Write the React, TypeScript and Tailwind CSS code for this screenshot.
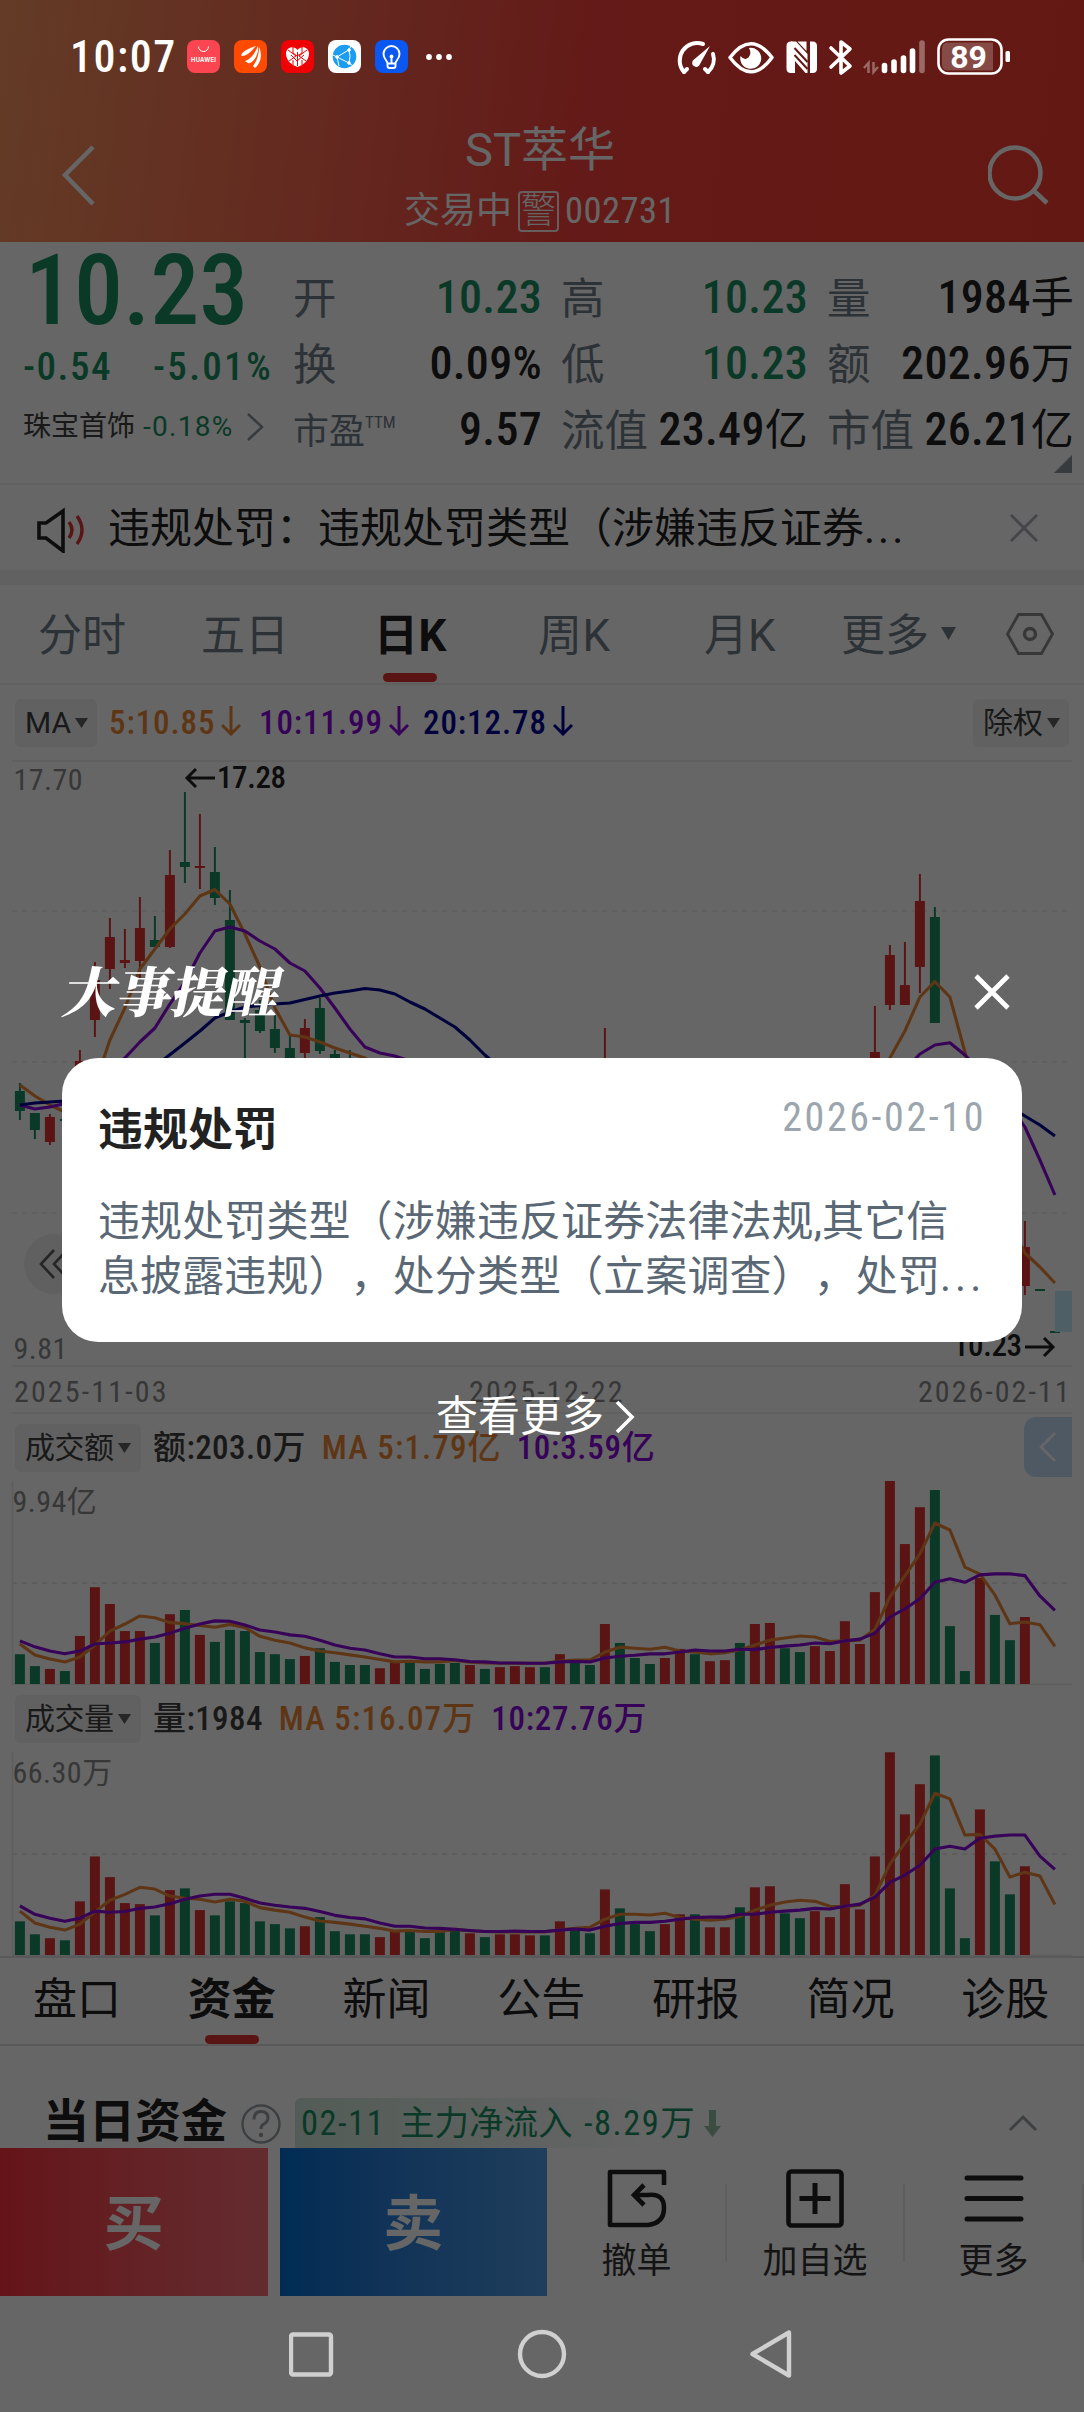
import React from 'react';
import clsx from 'clsx';

const UP = '#e13434';
const DOWN = '#199163';
const ORANGE = '#ea8838';
const PURPLE = '#8a08dc';
const NAVY = '#00009a';

const xAt = (i: number) => 19.9 + i * 15;

// g = closed down, r = closed up, one letter per trading day
const days = 'ggrgrrrrrgrgrggggggrgggg' + 'rrgggg' + 'rgrrrg' + 'rggrgggrrgrrgrrggrrrrrrrrgggrggr';

const amount = [
  696, 730, 738, 744, 644, 505, 553, 630, 630, 664, 582, 570, 641, 661, 627, 630, 690, 696, 710, 701, 679, 718, 727, 727,
  736, 718, 718, 738, 724, 721, 727, 738, 733, 730, 733, 733, 696, 718, 727, 610, 664, 707, 724, 707, 681, 696, 716, 713,
  664, 610, 607, 679, 690, 673, 687, 602, 667, 519, 202, 382, 277, 228, 616, 744, 479, 584, 656, 590,
];
const amountMa5 = [
  667, 698, 710, 718, 704, 670, 630, 610, 587, 592, 606, 609, 614, 619, 611, 620, 645, 656, 664, 678, 687, 692, 698, 704,
  711, 718, 716, 718, 718, 714, 719, 721, 722, 722, 722, 721, 716, 713, 713, 690, 676, 679, 682, 676, 687, 690, 695, 692,
  684, 670, 656, 650, 644, 647, 660, 658, 656, 625, 533, 473, 410, 322, 342, 448, 468, 527, 609, 604, 612, 674,
];
const amountMa10 = [
  658, 675, 687, 695, 687, 667, 664, 661, 653, 647, 636, 622, 610, 601, 602, 613, 627, 633, 641, 645, 656, 670, 679, 684,
  695, 704, 704, 709, 709, 712, 717, 718, 721, 721, 722, 722, 718, 717, 718, 707, 702, 699, 695, 695, 690, 684, 687, 687,
  682, 683, 677, 673, 670, 664, 666, 658, 653, 636, 590, 567, 538, 491, 481, 491, 470, 467, 467, 472, 530, 571,
];
const volume = [
  1457, 1494, 1505, 1511, 1400, 1272, 1331, 1405, 1408, 1440, 1368, 1363, 1425, 1440, 1400, 1405, 1457, 1465, 1477, 1471,
  1445, 1485, 1494, 1494, 1502, 1487, 1485, 1505, 1488, 1483, 1491, 1502, 1494, 1494, 1497, 1497, 1457, 1482, 1491, 1366,
  1420, 1465, 1485, 1465, 1437, 1437, 1474, 1474, 1417, 1360, 1357, 1434, 1448, 1428, 1445, 1351, 1423, 1272, 975, 1152,
  1066, 984, 1363, 1505, 1138, 1286, 1380, 1300,
];
const volumeMa5 = [
  1428, 1462, 1474, 1482, 1465, 1430, 1397, 1380, 1360, 1365, 1385, 1391, 1394, 1402, 1394, 1400, 1418, 1425, 1431, 1445,
  1456, 1460, 1465, 1471, 1477, 1485, 1483, 1486, 1486, 1480, 1484, 1486, 1487, 1487, 1487, 1487, 1481, 1477, 1474, 1451,
  1437, 1437, 1439, 1434, 1446, 1451, 1454, 1451, 1443, 1425, 1411, 1402, 1397, 1400, 1414, 1415, 1411, 1383, 1294, 1234,
  1180, 1092, 1108, 1211, 1209, 1251, 1331, 1317, 1328, 1409,
];
const volumeMa10 = [
  1413, 1437, 1448, 1457, 1448, 1428, 1431, 1429, 1420, 1416, 1407, 1394, 1385, 1380, 1380, 1391, 1405, 1411, 1416, 1420,
  1429, 1440, 1446, 1450, 1462, 1471, 1471, 1476, 1477, 1480, 1483, 1486, 1486, 1485, 1486, 1486, 1482, 1479, 1482, 1471,
  1463, 1460, 1460, 1457, 1451, 1446, 1445, 1445, 1437, 1437, 1431, 1428, 1425, 1420, 1422, 1414, 1408, 1388, 1346, 1325,
  1297, 1251, 1243, 1251, 1220, 1214, 1211, 1211, 1271, 1309,
];

// [day, high, body top, body bottom, low]
const candles = [
  [0, 1083, 1091, 1111, 1120], [1, 1113, 1113, 1130, 1139], [2, 1114, 1117, 1142, 1145], [3, 1118, 1119, 1121, 1122],
  [4, 1050, 1061, 1080, 1085], [5, 962, 980, 1020, 1037], [6, 918, 937, 969, 989], [7, 929, 960, 963, 968],
  [8, 897, 928, 961, 980], [9, 916, 940, 947, 947], [10, 850, 875, 947, 948], [11, 792, 862, 867, 883],
  [12, 814, 866, 868, 889], [13, 847, 872, 898, 905], [14, 890, 920, 1020, 1020], [15, 1018, 1020, 1023, 1070],
  [16, 1000, 1010, 1031, 1033], [17, 1015, 1029, 1048, 1053], [18, 1036, 1048, 1062, 1070], [19, 1019, 1028, 1053, 1062],
  [20, 998, 1008, 1051, 1054], [21, 1050, 1054, 1070, 1075], [22, 1050, 1062, 1070, 1075], [39, 1028, 1070, 1080, 1085],
  [57, 1006, 1052, 1080, 1085], [58, 945, 955, 1005, 1010], [59, 942, 985, 1005, 1005], [60, 874, 901, 967, 993],
  [61, 907, 917, 1023, 1023], [67, 1221, 1247, 1286, 1295],
];

const ma5 = [
  [[0, 1085], [1, 1096], [2, 1105], [3, 1112], [4, 1110], [5, 1085], [6, 1040], [7, 1008], [8, 969], [9, 949], [10, 929], [11, 914], [12, 896], [13, 889.5], [14, 904], [15, 934], [16, 967], [17, 1008], [18, 1035], [19, 1037], [20, 1042], [21, 1048], [22, 1053], [23, 1058], [24, 1066]],
  [[57, 1080], [58, 1058], [59, 1031], [60, 997], [61, 981.5], [62, 997], [63, 1052], [64, 1110], [66, 1225], [67, 1253], [68, 1267], [69, 1283]],
];
const ma10 = [
  [[0, 1105], [1, 1109], [2, 1107], [4, 1100], [6, 1071], [7, 1058], [8, 1042], [9, 1028], [10, 1004], [11, 982], [12, 953], [13, 931], [14, 927], [15, 931], [16, 941], [17, 949], [18, 963], [19, 971], [20, 988], [21, 1008], [22, 1029], [23, 1047], [24, 1053], [25, 1056], [26, 1061]],
  [[59, 1070], [60, 1054], [61, 1045], [62, 1042.7], [63, 1055], [64, 1070], [66, 1105], [67, 1127], [68, 1160], [69, 1195]],
];
const ma20 = [
  [[0, 1105], [1, 1103], [2, 1102], [4, 1100], [8, 1078], [11, 1043], [12, 1031], [13, 1018], [14, 1012], [15, 1007], [17, 1004], [18, 1003], [19, 999.5], [20, 996], [21, 993], [22, 991], [23, 988.5], [24, 990], [25, 994], [26, 1002], [27, 1009], [28, 1018], [29, 1027], [30, 1040], [31, 1055], [32, 1068]],
  [[64, 1090], [66, 1107], [67, 1116], [68, 1125], [69, 1136]],
];

const toPoints = (pts: number[][]) => pts.map(([i, y]) => `${xAt(i)},${y}`).join(' ');

function Caret({ className }: { className?: string }) {
  return (
    <svg width="13" height="10" viewBox="0 0 13 10" className={className} fill="currentColor">
      <path d="M0 0h13L6.500 10z" />
    </svg>
  );
}

function Pill({ children, className }: { children: React.ReactNode; className?: string }) {
  return (
    <div className={clsx('flex h-12 items-center gap-1 rounded-md bg-[#f2f2f2] pl-2.5 text-[30px] text-[#404040]', className)}>
      <span>{children}</span>
      <Caret className="text-[#606060]" />
    </div>
  );
}

function StatusBar() {
  return (
    <div className="absolute left-0 top-0 z-20 flex h-[113px] w-[1084px] items-center text-white">
      <span className="ml-[70px] w-[117px] text-[44px] font-medium leading-none tracking-[1.5px]">10:07</span>
      <div className="flex gap-3.5">
        <svg width="33" height="33" viewBox="0 0 33 33">
          <rect width="33" height="33" rx="8" fill="#fb4550" />
          <path d="M11.500 6.500a5 5 0 0 0 10 0" fill="none" stroke="#fff" strokeWidth="1" />
          <text x="16.500" y="21.500" textAnchor="middle" textLength="25" fontSize="5.800" fontWeight="700" fontFamily="Inter" fill="#fff">HUAWEI</text>
        </svg>
        <svg width="33" height="33" viewBox="0 0 33 33">
          <rect width="33" height="33" rx="8" fill="#fe4a02" />
          <path d="M7 15C10 10 16 8 22 6c-4 4-8 10-14 10zM11 21c6-2 10-8 13-15 1 6-2 14-8 17-2 1-3-1-5-2zM19 26c3-4 6-10 6-19 3 6 3 15-4 21z" fill="#fff" />
        </svg>
        <svg width="33" height="33" viewBox="0 0 33 33">
          <rect width="33" height="33" rx="8" fill="#ee0206" />
          <path d="M16.500 10C13 5 5 7 5 13.500 5 20 10 25 16.500 27 23 25 28 20 28 13.500 28 7 20 5 16.500 10z" fill="#fff" />
          <path d="M7 10l8 6-7 5M26 10l-8 6 7 5M12 7v6l4 3 5-3V7M16.500 12v14M10 15l6 6 7-6M12 20v5M21 20v5" fill="none" stroke="#ee0206" strokeWidth="1" />
        </svg>
        <svg width="33" height="33" viewBox="0 0 33 33">
          <rect width="33" height="33" rx="8" fill="#fff" />
          <circle cx="16.500" cy="16.500" r="11.800" fill="#1c9df2" />
          <g stroke="#fff" strokeWidth="1" fill="#fff">
            <path d="M9 17L20.500 10M9 17l12 6M21 10q2 6 0 13M5 15l4 2 2 9M21 10l2-4M21 23l4 3" fill="none" />
            <circle cx="9" cy="17" r="1.300" />
            <circle cx="21" cy="10" r="1.300" />
            <circle cx="21" cy="23" r="1.300" />
          </g>
        </svg>
        <svg width="33" height="33" viewBox="0 0 33 33">
          <rect width="33" height="33" rx="8" fill="#0b57f2" />
          <g fill="none" stroke="#fff" strokeWidth="1.900" strokeLinecap="round" strokeLinejoin="round">
            <path d="M12.500 23.500c0-3-4-4.500-4-9.500a8 8 0 0 1 16 0c0 5-4 6.500-4 9.500zM12.500 23.500v2.500q0 2 2 2h4q2 0 2-2v-2.500M16.500 23v-6" />
          </g>
          <circle cx="16.500" cy="16.500" r="1.900" fill="#fff" />
        </svg>
      </div>
      <svg width="30" height="8" viewBox="0 0 30 8" className="ml-4" fill="#fff">
        <circle cx="5" cy="4" r="2.900" />
        <circle cx="15" cy="4" r="2.900" />
        <circle cx="25" cy="4" r="2.900" />
      </svg>
      <svg width="336" height="40" viewBox="676 36 336 40" className="ml-[222px]" fill="none" stroke="#fff">
        {/* speed gauge */}
        <g strokeWidth="4" strokeLinecap="round">
          <path d="M684 71a17.500 17.500 0 0 1 19-28" />
          <path d="M708 71a17 17 0 0 0 5-18" />
          <path d="M684 71l3-3M708 71l-3-3" />
        </g>
        <path d="M710 45L700 63a4 4 0 1 1-6-4.500z" fill="#fff" stroke="none" />
        {/* eye */}
        <path d="M730 56.500Q751 29 772 56.500Q751 85 730 56.500z" strokeWidth="3.500" strokeLinejoin="round" />
        <path d="M749 47a10.500 10.500 0 1 1-8.500 8q4 5 8 1.500 3.500-4 .5-9.500z" fill="#fff" stroke="none" />
        {/* nfc */}
        <g fill="#fff" stroke="none">
          <path d="M791 40.500h1.500V72H791q-4.500 0-4.500-4.500V45q0-4.500 4.500-4.500zM812.500 72H810V40.500h2.500q4.500 0 4.500 4.500v22.500q0 4.500-4.500 4.500z" />
          <path d="M791 40.500h5L807.500 53v19h-2L795 60v12h-4zM797.500 40.500h9V50z" />
        </g>
        <path d="M794.500 47l13 14M794.500 54l13 14" stroke="#641a18" strokeWidth="2" />
        {/* bluetooth */}
        <path d="M831 47l19 18-9 7V41l9 7-19 18" strokeWidth="3.600" strokeLinejoin="round" strokeLinecap="round" />
        {/* data arrows and signal */}
        <g stroke="#fff" strokeOpacity=".35" strokeWidth="2.500">
          <path d="M868.500 72V62l-4.500 5M873.500 61v10l4.500-5" />
        </g>
        <g strokeWidth="5.600" strokeLinecap="round">
          <path d="M884.500 69.500v-5M894 69.500v-8.500M903.500 69.500V57M912.500 69.500V50" />
          <path d="M922 69.500V42" strokeOpacity=".35" />
        </g>
        {/* battery */}
        <rect x="938.500" y="38.500" width="63" height="34" rx="10" strokeWidth="2.600" />
        <path d="M948 41.500h45v28h-45q-6 0-6-6v-16q0-6 6-6z" fill="#fff" fillOpacity=".22" stroke="none" />
        <rect x="1005.500" y="50" width="4.500" height="11" rx="1.500" fill="#fff" stroke="none" />
        <text x="968.500" y="67" textAnchor="middle" fontSize="32" fontWeight="700" fontFamily="Roboto" fill="#fff" stroke="none">89</text>
      </svg>
    </div>
  );
}

function Header() {
  return (
    <header className="flex h-[242px] justify-between bg-[linear-gradient(97deg,#f8965f_0%,#fa5a4b_38%,#fa413c_55%,#f83e30_100%)] pl-[60px] pr-[34px] pt-[118px] text-white">
      <svg width="36" height="64" viewBox="0 0 36 64" className="mt-6" fill="none" stroke="#fff" strokeWidth="4.500">
        <path d="M33 5L5 33l28 29" />
      </svg>
      <div className="mr-1 flex flex-col items-center">
        <h1 className="h-[62px] font-['Roboto','Noto_Sans_CJK_SC',sans-serif] text-[47px] leading-[64px]">ST萃华</h1>
        <div className="flex h-[62px] items-center text-[36.5px] leading-none">
          <span className="text-[36px]">交易中</span>
          <span className="mx-1.5 flex h-[41px] w-[41px] items-center justify-center rounded border-2 border-white/90 text-[35px] font-light">警</span>
          <span className="tracking-[0.5px]">002731</span>
        </div>
      </div>
      <svg width="62" height="64" viewBox="0 0 62 64" className="mt-6" fill="none" stroke="#fff" strokeWidth="4.500">
        <circle cx="27" cy="31" r="25.500" />
        <path d="M45 48l14 13" />
      </svg>
    </header>
  );
}

const quotes = [
  [{ k: '开', v: '10.23', down: true }, { k: '高', v: '10.23', down: true }, { k: '量', v: '1984', unit: '手' }],
  [{ k: '换', v: '0.09%' }, { k: '低', v: '10.23', down: true }, { k: '额', v: '202.96', unit: '万' }],
  [{ k: '市盈', v: '9.57', ttm: true }, { k: '流值', v: '23.49', unit: '亿' }, { k: '市值', v: '26.21', unit: '亿' }],
] as { k: string; v: string; unit?: string; down?: boolean; ttm?: boolean }[][];

function QuotePanel() {
  return (
    <section className="relative flex h-[243px] border-b-2 border-[#efefef]">
      <div className="w-[293px] font-medium leading-none text-[#199163]">
        <div className="flex h-[98px] items-center pl-[25px] text-[98px]">10.23</div>
        <div className="flex h-[54px] items-center pl-[23px] text-[39px]">
          <span className="w-[130px] tracking-[1.5px]">-0.54</span>
          <span className="tracking-[2.3px]">-5.01%</span>
        </div>
        <div className="flex h-[66px] items-center pl-[23px] font-['Roboto','Noto_Sans_CJK_SC',sans-serif] text-[28px] font-normal">
          <span className="text-[#404040]">珠宝首饰</span>
          <span className="ml-2 tracking-[1.3px]">-0.18%</span>
          <svg width="18" height="30" viewBox="0 0 18 30" className="ml-3" fill="none" stroke="#8a939b" strokeWidth="2.500">
            <path d="M2 2l14 13L2 28" />
          </svg>
        </div>
      </div>
      <div className="grid grid-cols-[249px_247px_247px] grid-rows-[66px_66px_66px] gap-x-[19px] pt-[22px]">
        {quotes.flat().map(q => (
          <div key={q.k} className="flex items-center justify-between leading-none">
            <span className="flex pt-1.5 text-[43.5px] text-[#717e8a]">
              {q.ttm ? <><span className="text-[36px]">{q.k}</span><span className="text-[17px]">TTM</span></> : q.k}
            </span>
            <span className={clsx('text-[46px] font-medium tracking-[0.3px]', q.down ? 'text-[#199163]' : 'text-[#222222]')}>
              {q.v}{q.unit && <span className="text-[43px] font-normal">{q.unit}</span>}
            </span>
          </div>
        ))}
      </div>
      <svg width="18" height="18" viewBox="0 0 18 18" className="absolute bottom-2.5 right-3" fill="#8a939b">
        <path d="M18 0v18H0z" />
      </svg>
    </section>
  );
}

function NoticeBar() {
  return (
    <div className="flex h-[85px] items-center text-[#222]">
      <svg width="50" height="46" viewBox="0 0 50 46" className="ml-[36px] mt-1" fill="none">
        <path d="M3 16h7L27 4v40L10 31H3z" stroke="#222" strokeWidth="3.600" />
        <path d="M33 15q6 8 0 16M41 9q10 14 0 28" stroke="#e13434" strokeWidth="3.400" />
      </svg>
      <p className="ml-[22px] mt-0.5 whitespace-nowrap text-[42px] leading-none [text-spacing-trim:space-all]">违规处罚：违规处罚类型（涉嫌违反证券<span className="tracking-[3px]">...</span></p>
      <svg width="28" height="28" viewBox="0 0 28 28" className="ml-auto mr-[46px]" stroke="#a8adb3" strokeWidth="2.800">
        <path d="M1 1l26 26M27 1L1 27" />
      </svg>
    </div>
  );
}

function PeriodTabs() {
  return (
    <nav className="flex h-[100px] items-center border-b-2 border-[#efefef] pl-[38px] pt-1 font-['Roboto','Noto_Sans_CJK_SC',sans-serif] text-[44px] leading-none text-[#717e8a]">
      <span className="w-[163px]">分时</span>
      <span className="w-[173px]">五日</span>
      <span className="relative w-[164px] font-bold tracking-[0.5px] text-[#222]">
        日K
        <i className="absolute left-[9px] top-[59px] h-[9px] w-[54px] rounded-full bg-[#e13434]" />
      </span>
      <span className="w-[166px] tracking-[0.5px]">周K</span>
      <span className="w-[137px]">月K</span>
      <span>更多</span>
      <svg width="15" height="13" viewBox="0 0 15 13" className="mb-1.5 ml-3" fill="currentColor">
        <path d="M0 0h15L7.500 13z" />
      </svg>
      <svg width="48" height="42" viewBox="0 0 48 42" className="mb-1 ml-[50px]" fill="none" stroke="#8a8a8a" strokeWidth="2.800">
        <path d="M12.500 1.500h23L46.500 21l-11 19.500h-23L1.500 21z" />
        <circle cx="24" cy="21" r="5.500" strokeWidth="3.400" />
      </svg>
    </nav>
  );
}

function MaValue({ text, className }: { text: string; className: string }) {
  return (
    <span className={clsx('flex items-center', className)}>
      {text}
      <svg width="20" height="30" viewBox="0 0 20 30" className="mb-1 ml-1.5" fill="none" stroke="currentColor" strokeWidth="3">
        <path d="M10 0v28M1 19l9 9 9-9" />
      </svg>
    </span>
  );
}

function KChart() {
  return (
    <div>
      <div className="flex h-[75px] items-center pl-[15px] pr-[15px] text-[33px] font-medium leading-none tracking-[0.9px]">
        <Pill className="w-[82px] font-['Roboto'] font-normal tracking-normal">MA</Pill>
        <MaValue text="5:10.85" className="ml-3 w-[150px] text-[#ea8838]" />
        <MaValue text="10:11.99" className="w-[164px] text-[#8a08dc]" />
        <MaValue text="20:12.78" className="text-[#00009a]" />
        <Pill className="ml-auto w-24 font-normal tracking-normal">除权</Pill>
      </div>
      <svg width="1084" height="654" viewBox="0 760 1084 654" className="block" fill="none">
        <g stroke="#efefef" strokeWidth="2">
          <path d="M12 761h1060M12 1366h1060M12 1413h1060" />
          <path d="M12 911h1060M12 1062h1060M12 1213h1060" strokeDasharray="5 5" />
        </g>
        {candles.map(([i, high, top, bottom, low]) => {
          const color = days[i] === 'r' ? UP : DOWN;
          return (
            <g key={i} fill={color}>
              <rect x={xAt(i) - 1} y={high} width="2" height={low - high} />
              <rect x={xAt(i) - 5} y={top} width="10" height={bottom - top} />
            </g>
          );
        })}
        <path d="M1035 1290h10M1050 1332h10" stroke={DOWN} strokeWidth="2" />
        <rect x="1055" y="1291" width="17" height="41" fill="#c0f0ff" fillOpacity=".95" />
        <g strokeWidth="3.100" strokeLinejoin="round">
          {ma5.map((p, i) => <polyline key={i} points={toPoints(p)} stroke={ORANGE} />)}
          {ma10.map((p, i) => <polyline key={i} points={toPoints(p)} stroke={PURPLE} />)}
          {ma20.map((p, i) => <polyline key={i} points={toPoints(p)} stroke={NAVY} />)}
        </g>
        <g stroke="#222" strokeWidth="3">
          <path d="M215 778h-28M196 769l-9 9 9 9M1025 1347h28M1044 1338l9 9-9 9" />
        </g>
        <circle cx="54" cy="1264" r="30" fill="#f0f0f0" />
        <path d="M54 1250l-13 14 13 14M67 1250l-13 14 13 14" stroke="#606060" strokeWidth="2.600" />
        <g fontFamily="Roboto Condensed" fontSize="30" fill="#8a8a8a" letterSpacing=".5">
          <text x="13.500" y="790">17.70</text>
          <text x="13.500" y="1359">9.81</text>
          <text x="14" y="1402" textLength="153">2025-11-03</text>
          <text x="469" y="1402" textLength="154">2025-12-22</text>
          <text x="918" y="1402" textLength="152">2026-02-11</text>
        </g>
        <g fontFamily="Roboto Condensed" fontSize="31" fontWeight="500" fill="#222">
          <text x="217" y="788" textLength="69">17.28</text>
          <text x="953" y="1356" textLength="69">10.23</text>
        </g>
      </svg>
    </div>
  );
}

interface VolumeProps {
  name: string;
  value: string;
  five: string;
  ten: string;
  max: string;
  base: number;
  bars: number[];
  avg5: number[];
  avg10: number[];
  children?: React.ReactNode;
}

function VolumePanel({ name, value, five, ten, max, base, bars, avg5, avg10, children }: VolumeProps) {
  const y = (v: number) => 203 - (base - v) / 2.851;
  const line = (pts: number[]) => pts.map((v, i) => `${xAt(i)},${y(v)}`).join(' ');
  return (
    <section className="relative h-[271px]">
      <div className="flex h-[67px] items-center pl-[15px] text-[33px] font-medium leading-none tracking-[0.7px]">
        <Pill className="w-[126px] font-normal tracking-[-0.5px]">{name}</Pill>
        <span className="ml-3 tracking-[0.4px] text-[#404040]">{value}</span>
        <span className="ml-4 tracking-[1.1px] text-[#ea8838]">{five}</span>
        <span className="ml-[15px] text-[#8a08dc]">{ten}</span>
      </div>
      {children}
      <svg width="1084" height="204" viewBox="0 0 1084 204" className="block" fill="none">
        <path d="M12.500 0v204M12 203.500h1060" stroke="#e8e8e8" strokeWidth="1.500" />
        <path d="M12 102h1060" stroke="#e8e8e8" strokeWidth="2" strokeDasharray="5 5" />
        {bars.map((v, i) => (
          <rect key={i} x={xAt(i) - 5} y={y(v)} width="10" height={203 - y(v)} fill={days[i] === 'r' ? UP : DOWN} />
        ))}
        <g strokeWidth="3.100" strokeLinejoin="round">
          <polyline points={line(avg5)} stroke={ORANGE} />
          <polyline points={line(avg10)} stroke={PURPLE} />
        </g>
        <text x="12.500" y="30.500" fontSize="30" fill="#8a8a8a" letterSpacing=".5">{max}</text>
      </svg>
    </section>
  );
}

const infoTabs = ['盘口', '资金', '新闻', '公告', '研报', '简况', '诊股'];

function InfoTabs() {
  return (
    <nav className="flex h-[90px] border-b-2 border-t-2 border-[#e0e0e0] pl-px text-[44px] leading-[84px] text-[#222]">
      {infoTabs.map(t => (
        <span key={t} className={clsx('relative w-[155px] pl-8', t === '资金' && 'font-bold')}>
          {t}
          {t === '资金' && <i className="absolute bottom-0 left-[49px] h-[9px] w-[54px] rounded-full bg-[#e13434]" />}
        </span>
      ))}
    </nav>
  );
}

function FundsRow() {
  return (
    <div className="flex h-[102px] items-end pl-[43px] leading-none">
      <h2 className="mb-1 text-[46px] font-bold leading-[46px] text-[#222]">当日资金</h2>
      <svg width="40" height="40" viewBox="0 0 40 40" className="mb-1 ml-3.5" fill="none" stroke="#9aa0a6" strokeWidth="2.400">
        <circle cx="20" cy="20" r="18.500" />
        <path d="M13 15.500q0-8 7-8t7 6.500q0 4-5 6.500-2 1.200-2 4.500" strokeWidth="3" />
        <circle cx="20" cy="31" r="2.200" fill="#9aa0a6" stroke="none" />
      </svg>
      <div className="ml-[14px] flex h-[50px] w-[430px] items-center rounded-t-md bg-[linear-gradient(90deg,#cfe6da,#ffffff_85%)] pl-1.5 text-[34.500px] text-[#199163]">
        <span className="w-[99px] tracking-[1.5px]">02-11</span>
        <span className="w-[184px]">主力净流入</span>
        <span className="tracking-[1.5px]">-8.29万</span>
        <svg width="17" height="27" viewBox="0 0 17 27" className="ml-2" fill="#8fc0a8">
          <path d="M5 0h7v16h5l-8.500 11L0 16h5z" />
        </svg>
      </div>
      <svg width="30" height="18" viewBox="0 0 30 18" className="mb-4 ml-auto mr-[46px]" fill="none" stroke="#9aa0a6" strokeWidth="3">
        <path d="M2 16L15 3l13 13" />
      </svg>
    </div>
  );
}

function TradeBar() {
  return (
    <div className="flex h-[148px] text-[35px] leading-none text-[#333]">
      <div className="flex w-[268px] items-center justify-center bg-gradient-to-r from-[#fa3240] to-[#fa6e78] pt-1.5 text-[60px] font-bold text-white">买</div>
      <div className="ml-3 flex w-[268px] items-center justify-center bg-gradient-to-r from-[#006ed2] to-[#509be6] pt-1.5 text-[60px] font-bold text-white">卖</div>
      <div className="flex flex-1 items-center pl-px pt-0.5">
        <div className="flex w-[177px] flex-col items-center gap-4">
          <svg width="60" height="60" viewBox="0 0 60 60" fill="none" stroke="#222" strokeWidth="4.600">
            <path d="M57 17V4H3v53h38q16-2 16-17T41 27H27" strokeLinejoin="round" />
            <path d="M37 17L27 27l10 10" />
          </svg>
          <span>撤单</span>
        </div>
        <i className="h-[78px] w-0.5 bg-[#eaeaea]" />
        <div className="flex w-[176px] flex-col items-center gap-4">
          <svg width="60" height="60" viewBox="0 0 60 60" fill="none" stroke="#222" strokeWidth="4.600">
            <rect x="3.500" y="3.500" width="53" height="54" rx="3" />
            <path d="M30 15v31M14.500 30.500h31" strokeWidth="5" />
          </svg>
          <span>加自选</span>
        </div>
        <i className="h-[78px] w-0.5 bg-[#eaeaea]" />
        <div className="flex w-[177px] flex-col items-center gap-4">
          <svg width="60" height="60" viewBox="0 0 60 60" fill="none" stroke="#222" strokeWidth="5" strokeLinecap="round">
            <path d="M3 10h54M3 30.500h54M3 51h54" />
          </svg>
          <span>更多</span>
        </div>
        <i className="h-[78px] w-0.5 bg-[#eaeaea]" />
      </div>
    </div>
  );
}

function EventDialog() {
  return (
    <div className="absolute inset-0 z-10 flex flex-col items-center bg-black/60 pt-[955px]">
      <div className="flex h-[103px] w-[960px] items-start justify-between">
        <h2 className="-skew-x-12 pl-1 font-['Noto_Serif_CJK_SC',serif] text-[54px] font-black leading-[68px] text-white">大事提醒</h2>
        <svg width="36" height="36" viewBox="0 0 36 36" className="mr-3 mt-[19px]" stroke="#fff" strokeWidth="4.800">
          <path d="M2 2l32 32M34 2L2 34" />
        </svg>
      </div>
      <div className="h-[284px] w-[960px] rounded-[36px] bg-white px-[36px] pt-[41px]">
        <div className="flex h-[95px] items-start justify-between">
          <h3 className="text-[45px] font-bold leading-[64px] text-[#222]">违规处罚</h3>
          <span className="text-[40px] leading-[37px] tracking-[2.6px] text-[#9ba5ae]">2026-02-10</span>
        </div>
        <p className="whitespace-nowrap text-[42px] leading-[55px] tracking-[0.1px] text-[#5a6875] [text-spacing-trim:space-all]">
          违规处罚类型（涉嫌违反证券法律法规,其它信<br />
          息披露违规），处分类型（立案调查），处罚<span className="tracking-[4px]">...</span>
        </p>
      </div>
      <div className="mt-[54px] flex h-[42px] items-center pr-3 text-[42px] leading-none text-white">
        查看更多
        <svg width="22" height="34" viewBox="0 0 22 34" className="ml-2.5" fill="none" stroke="#fff" strokeWidth="3.600">
          <path d="M3 2l15 15L3 32" />
        </svg>
      </div>
    </div>
  );
}

function SystemNav() {
  return (
    <div className="absolute bottom-0 left-0 z-20 flex h-[116px] w-[1084px] items-center justify-center">
      <svg width="506" height="52" viewBox="289 2328 506 52" fill="none" stroke="#d0d0d0" strokeWidth="4.400" strokeLinejoin="round">
        <rect x="291" y="2334.500" width="40" height="40" rx="2" />
        <circle cx="542" cy="2354" r="22" />
        <path d="M789 2332.500v43L752.500 2354z" />
      </svg>
    </div>
  );
}

export default function App() {
  return (
    <div className="relative h-[2412px] w-[1084px] overflow-hidden bg-white font-['Roboto_Condensed','Noto_Sans_CJK_SC',sans-serif]">
      <StatusBar />
      <Header />
      <QuotePanel />
      <NoticeBar />
      <div className="h-[15px] bg-[#f2f2f2]" />
      <PeriodTabs />
      <KChart />
      <VolumePanel name="成交额" value="额:203.0万" five="MA 5:1.79亿" ten="10:3.59亿" max="9.94亿" base={781} bars={amount} avg5={amountMa5} avg10={amountMa10}>
        <div className="absolute right-3 top-[3px] flex h-[60px] w-12 items-center justify-center rounded-l-xl bg-[#c5dff7]">
          <svg width="18" height="30" viewBox="0 0 18 30" fill="none" stroke="#fff" strokeWidth="2.600">
            <path d="M16 1L2 15l14 14" />
          </svg>
        </div>
      </VolumePanel>
      <VolumePanel name="成交量" value="量:1984" five="MA 5:16.07万" ten="10:27.76万" max="66.30万" base={1553} bars={volume} avg5={volumeMa5} avg10={volumeMa10} />
      <InfoTabs />
      <FundsRow />
      <TradeBar />
      <EventDialog />
      <SystemNav />
    </div>
  );
}
